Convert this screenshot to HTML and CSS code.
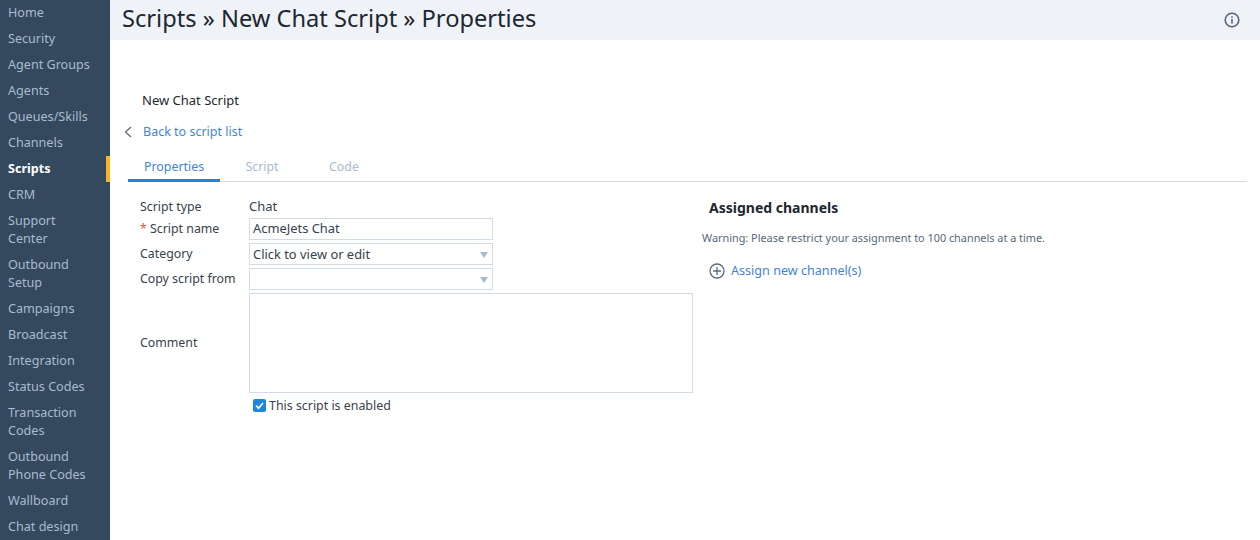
FILE: index.html
```html
<!DOCTYPE html>
<html lang="en">
<head>
<meta charset="utf-8">
<title>Scripts - New Chat Script - Properties</title>
<link rel="stylesheet" href="styles.css">
</head>
<body>
<div class="app">
  <nav class="sidebar">
    <a class="nav-item">Home</a>
    <a class="nav-item">Security</a>
    <a class="nav-item">Agent Groups</a>
    <a class="nav-item">Agents</a>
    <a class="nav-item">Queues/Skills</a>
    <a class="nav-item">Channels</a>
    <a class="nav-item active">Scripts</a>
    <a class="nav-item">CRM</a>
    <a class="nav-item">Support Center</a>
    <a class="nav-item">Outbound Setup</a>
    <a class="nav-item">Campaigns</a>
    <a class="nav-item">Broadcast</a>
    <a class="nav-item">Integration</a>
    <a class="nav-item">Status Codes</a>
    <a class="nav-item">Transaction Codes</a>
    <a class="nav-item">Outbound Phone Codes</a>
    <a class="nav-item">Wallboard</a>
    <a class="nav-item">Chat design</a>
  </nav>
  <main class="main">
    <header class="topbar">
      <h1 class="title">Scripts » New Chat Script » Properties</h1>
      <svg class="info" width="16" height="16" viewBox="0 0 16 16" aria-hidden="true">
        <circle cx="8" cy="8" r="6.8" fill="none" stroke="#56677a" stroke-width="1.6"/>
        <rect x="7.2" y="7" width="1.6" height="4.6" fill="#56677a"/>
        <rect x="7.2" y="4.2" width="1.6" height="1.6" fill="#56677a"/>
      </svg>
    </header>
    <section class="content">
      <div class="script-name">New Chat Script</div>
      <a class="back">
        <svg class="back-icon" width="8" height="12" viewBox="0 0 8 12" aria-hidden="true">
          <path d="M7 1 L1.5 6 L7 11" fill="none" stroke="#5b6b7c" stroke-width="1.3"/>
        </svg>
        <span>Back to script list</span>
      </a>
      <div class="tabs">
        <span class="tab selected">Properties</span>
        <span class="tab">Script</span>
        <span class="tab">Code</span>
      </div>
      <div class="panes">
        <form class="form">
          <span class="label label-type">Script type</span>
          <span class="value">Chat</span>
          <span class="label"><span class="req">*</span> Script name</span>
          <div class="field field-name">AcmeJets Chat</div>
          <span class="label">Category</span>
          <div class="field select">Click to view or edit<i class="caret"></i></div>
          <span class="label">Copy script from</span>
          <div class="field select"><i class="caret"></i></div>
          <span class="label">Comment</span>
          <div class="textarea"></div>
          <label class="check">
            <svg width="13" height="13" viewBox="0 0 13 13" aria-hidden="true">
              <rect width="13" height="13" rx="2" fill="#1f86de"/>
              <path d="M3 6.6 L5.5 9.2 L10 4" fill="none" stroke="#fff" stroke-width="1.7"/>
            </svg>
            <span>This script is enabled</span>
          </label>
        </form>
        <aside class="assigned">
          <h2 class="assigned-title">Assigned channels</h2>
          <p class="warning">Warning: Please restrict your assignment to 100 channels at a time.</p>
          <a class="assign">
            <svg width="16" height="16" viewBox="0 0 16 16" aria-hidden="true">
              <circle cx="8" cy="8" r="7" fill="none" stroke="#5b6b7c" stroke-width="1.3"/>
              <path d="M8 4 V12 M4 8 H12" stroke="#5b6b7c" stroke-width="1.3"/>
            </svg>
            <span>Assign new channel(s)</span>
          </a>
        </aside>
      </div>
    </section>
  </main>
</div>
</body>
</html>
```
FILE: styles.css
```css
* { box-sizing: border-box; }
html, body { margin: 0; height: 100%; overflow: hidden; }
body { font-family: "Noto Sans", "Open Sans", sans-serif; font-size: 13px; color: #2f3a46; background: #fff; }
.app { display: flex; height: 540px; }
.sidebar { width: 110px; flex: none; background: #34495e; overflow: hidden; }
.nav-item { display: block; padding: 4px 16px 4px 8px; line-height: 18px; font-size: 12.6px; color: #a9bbd0; }
.nav-item.active { color: #fff; font-weight: 700; border-right: 4px solid #fbb225; padding-right: 12px; }
.main { flex: 1; min-width: 0; }
.topbar { height: 40px; background: #eff3f8; display: flex; align-items: center; justify-content: space-between; padding: 0 20px 0 12px; }
.title { margin: 0 0 3px; font-size: 23.65px; font-weight: 400; color: #1d2730; line-height: 37px; }
.info { flex: none; }
.content { padding: 51px 13px 0 18px; }
.script-name { margin-left: 14px; line-height: 18px; color: #1d2730; font-size: 13px; }
.back { display: flex; align-items: center; margin: 14px 0 0 -4px; line-height: 18px; font-size: 12.5px; color: #3f84d6; }
.back-icon { margin-right: 11px; }
.tabs { display: flex; margin-top: 16px; border-bottom: 1px solid #d3dbe5; height: 25px; font-size: 12.4px; }
.tab { width: 84px; margin-bottom: -1px; padding-top: 1px; text-align: center; color: #a9bbd0; line-height: 18px; }
.tab:last-child { width: 80px; }
.tab.selected { width: 92px; color: #3f84d6; border-bottom: 3px solid #1f86de; }
.panes { display: flex; }
.form { width: 565px; margin: 12px 0 0 12px; display: grid; grid-template-columns: 109px 444px; grid-template-rows: 21px 22px 22px 22px 100px auto; row-gap: 3px; align-items: center; }
.label { line-height: 18px; font-size: 12.35px; color: #37424e; }
.label-type { margin-top: 4px; }
.req { color: #e0564c; }
.value { color: #37424e; margin-top: 3px; }
.field { position: relative; width: 244px; height: 22px; border: 1px solid #d3dbe5; padding-left: 3px; line-height: 20px; font-size: 12.9px; color: #37424e; }
.field-name { line-height: 18px; }
.caret { position: absolute; right: 4px; top: 8px; width: 0; height: 0; border-left: 4.5px solid transparent; border-right: 4.5px solid transparent; border-top: 6px solid #a9b9cf; }
.textarea { height: 100px; border: 1px solid #d3dbe5; }
.check { grid-column: 2; display: flex; align-items: center; gap: 3px; padding-left: 4px; height: 20px; font-size: 12.4px; color: #37424e; margin-top: -1px; }
.assigned { margin-left: -3px; padding-top: 16px; }
.assigned-title { margin: 0 0 0 7px; font-size: 14px; font-weight: 700; color: #1d2730; line-height: 20px; }
.warning { margin: 12px 0 0; font-size: 10.87px; line-height: 16px; color: #56677a; }
.assign { display: flex; align-items: center; gap: 6px; margin: 16px 0 0 7px; line-height: 18px; font-size: 12.6px; color: #3f84d6; }
```
